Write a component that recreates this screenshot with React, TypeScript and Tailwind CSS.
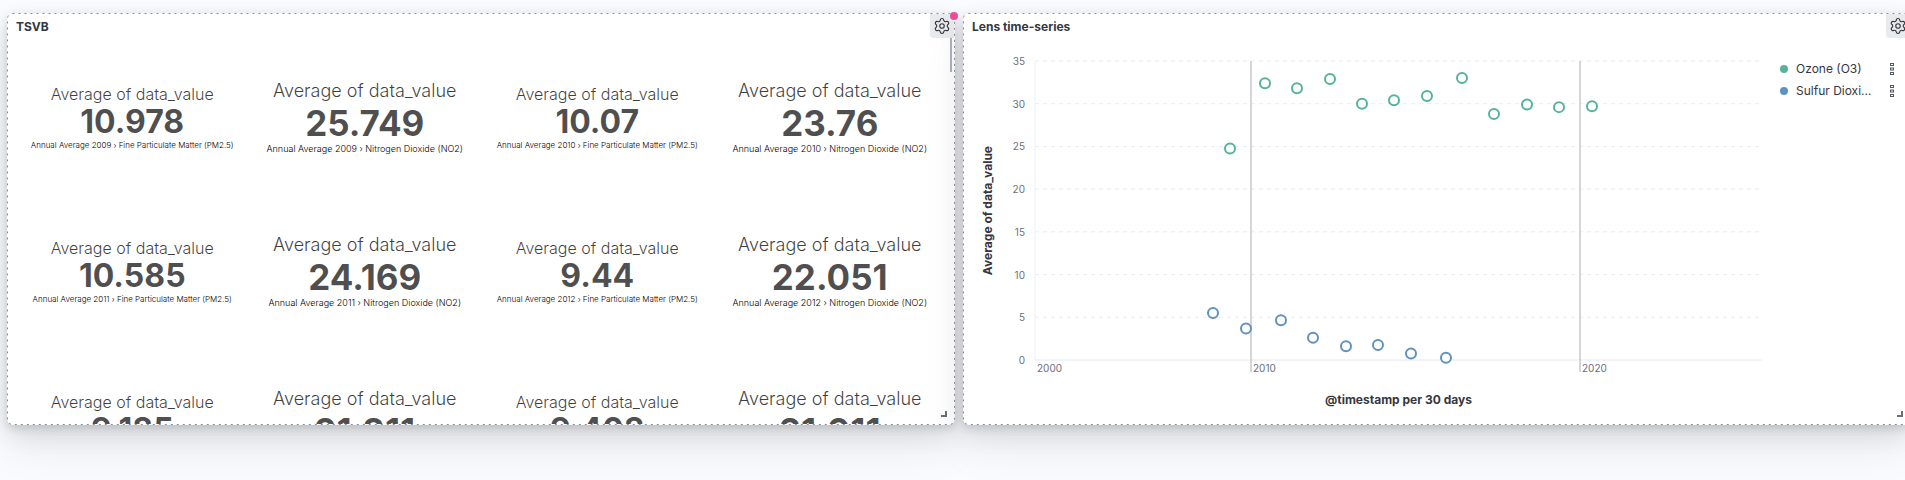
import type { ReactNode } from "react";
import { Settings } from "lucide-react";

type Metric = { value: string; label: string };

const metrics: Metric[] = [
  { value: "10.978", label: "Annual Average 2009 › Fine Particulate Matter (PM2.5)" },
  { value: "25.749", label: "Annual Average 2009 › Nitrogen Dioxide (NO2)" },
  { value: "10.07", label: "Annual Average 2010 › Fine Particulate Matter (PM2.5)" },
  { value: "23.76", label: "Annual Average 2010 › Nitrogen Dioxide (NO2)" },
  { value: "10.585", label: "Annual Average 2011 › Fine Particulate Matter (PM2.5)" },
  { value: "24.169", label: "Annual Average 2011 › Nitrogen Dioxide (NO2)" },
  { value: "9.44", label: "Annual Average 2012 › Fine Particulate Matter (PM2.5)" },
  { value: "22.051", label: "Annual Average 2012 › Nitrogen Dioxide (NO2)" },
  { value: "9.185", label: "Annual Average 2013 › Fine Particulate Matter (PM2.5)" },
  { value: "21.311", label: "Annual Average 2013 › Nitrogen Dioxide (NO2)" },
  { value: "9.408", label: "Annual Average 2014 › Fine Particulate Matter (PM2.5)" },
  { value: "21.011", label: "Annual Average 2014 › Nitrogen Dioxide (NO2)" },
];

// Horizontal positions are in units of the plot domain (0 to DOMAIN).
const DOMAIN = 727;
const PLOT_HEIGHT = 299;
const MAX_VALUE = 35;

const series = [
  {
    name: "Ozone (O3)",
    color: "#54b399",
    points: [
      [195, 24.75], [230, 32.4], [262, 31.8], [295, 32.9], [327, 30], [359, 30.4],
      [392, 30.9], [427, 33], [459, 28.8], [492, 29.9], [524, 29.6], [557, 29.7],
    ],
  },
  {
    name: "Sulfur Dioxi…",
    color: "#6092c0",
    points: [
      [178, 5.5], [211, 3.7], [246, 4.65], [278, 2.6], [311, 1.6], [343, 1.75], [376, 0.75], [411, 0.25],
    ],
  },
];

const xTicks = [
  { label: "2000", at: 0 },
  { label: "2010", at: 216 },
  { label: "2020", at: 545 },
];
const yTicks = [35, 30, 25, 20, 15, 10, 5, 0];

const px = (x: number) => `${(x / DOMAIN) * 100}%`;
const py = (v: number) => PLOT_HEIGHT - (v / MAX_VALUE) * PLOT_HEIGHT;

function Panel({ title, badge, children }: { title: string; badge?: boolean; children: ReactNode }) {
  return (
    <section className="relative flex h-[412px] min-w-0 flex-col rounded-md border border-transparent bg-white shadow-[0_3px_9px_rgba(0,0,0,0.13),0_9px_24px_rgba(0,0,0,0.09),0_22px_43px_rgba(0,0,0,0.08)]">
      <header className="flex h-6 shrink-0 items-center justify-between pl-2">
        <h2 className="pt-0.5 text-xs font-bold text-[#343741]">{title}</h2>
        <button
          type="button"
          aria-label="Panel options"
          className="flex size-6 items-center justify-center rounded-tr rounded-bl bg-[#e9eaec] text-[#343741]"
        >
          <Settings size={18} strokeWidth={1.5} />
        </button>
      </header>
      {children}
      <svg className="pointer-events-none absolute -inset-px size-[calc(100%+2px)]" aria-hidden="true">
        <rect
          x="0.5"
          y="0.5"
          rx="5"
          className="h-[calc(100%-1px)] w-[calc(100%-1px)]"
          fill="none"
          stroke="#858c9c"
          strokeDasharray="2 4"
        />
      </svg>
      <span className="absolute right-[7px] bottom-[7px] size-1.5 border-r-2 border-b-2 border-[#69707d]" />
      {badge && <span className="absolute -top-0.5 -right-1 size-2 rounded-full bg-[#f04e98]" />}
    </section>
  );
}

function MetricCell({ metric, large }: { metric: Metric; large: boolean }) {
  return (
    <div className="flex h-[154px] flex-col items-center justify-center whitespace-nowrap">
      <div className={large ? "text-[18px] leading-[26px] font-light text-black/75" : "text-[16px] leading-[24px] font-light text-black/75"}>
        Average of data_value
      </div>
      <div className={large ? "text-[35px] leading-[38px] font-bold text-black/70" : "text-[32px] leading-[32px] font-bold text-black/70"}>
        {metric.value}
      </div>
      <div className={large ? "text-[9px] leading-[14px] font-light text-black" : "text-[8px] leading-[14px] font-light text-black"}>
        {metric.label}
      </div>
    </div>
  );
}

function Chart() {
  return (
    <div className="flex min-h-0 flex-1 pt-[23px] pr-2">
      <div className="flex h-[299px] w-12 shrink-0 items-center pl-4">
        <span className="rotate-180 text-xs leading-4 font-bold whitespace-nowrap text-[#343741] [writing-mode:vertical-rl]">
          Average of data_value
        </span>
      </div>
      <div className="-mt-[7px] flex h-[313px] w-[13px] shrink-0 flex-col justify-between text-right text-[10px] leading-[14px] text-[#69707d]">
        {yTicks.map((t) => (
          <span key={t}>{t}</span>
        ))}
      </div>
      <div className="ml-2.5 flex min-w-0 flex-1 flex-col">
        <svg className="h-[315px] w-full shrink-0 overflow-visible" role="img" aria-label="Average of data_value over time">
          {yTicks.map((t) => (
            <line key={t} x1="0" x2="100%" y1={py(t)} y2={py(t)} stroke="#eaecf3" strokeDasharray="4 4" />
          ))}
          <line x1="0" x2="0" y1="0" y2={PLOT_HEIGHT} stroke="#eef0f6" />
          <line x1="0" x2="100%" y1={PLOT_HEIGHT} y2={PLOT_HEIGHT} stroke="#eceef6" />
          {xTicks.map((t) => (
            <g key={t.label}>
              {t.at > 0 && <line x1={px(t.at)} x2={px(t.at)} y1="0" y2="311" stroke="#c8c8ca" strokeWidth="1.5" />}
              <text x={px(t.at)} y="311" dx="2" fontSize="10" fill="#69707d">
                {t.label}
              </text>
            </g>
          ))}
          {series.map((s) =>
            s.points.map(([x, v]) => (
              <circle key={`${s.name}-${x}`} cx={px(x)} cy={py(v)} r="5" fill="#fff" stroke={s.color} strokeWidth="2" />
            )),
          )}
        </svg>
        <div className="mt-4 text-center text-xs leading-4 font-bold text-[#343741]">@timestamp per 30 days</div>
      </div>
      <ul className="-mt-[3px] ml-4 w-[124px] shrink-0 text-xs leading-[22px] text-[#343741]">
        {series.map((s) => (
          <li key={s.name} className="flex items-center">
            <svg viewBox="0 0 8 8" className="mr-2 ml-0.5 size-2">
              <circle cx="4" cy="4" r="4" fill={s.color} />
            </svg>
            <span className="flex-1">{s.name}</span>
            <button type="button" aria-label={`${s.name} options`} className="mr-[7px]">
              <svg viewBox="0 0 6 12" className="h-3 w-1.5" fill="none" stroke="#535766">
                <rect x="1.5" y="0.5" width="3" height="2" />
                <rect x="1.5" y="5" width="3" height="2" />
                <rect x="1.5" y="9.5" width="3" height="2" />
              </svg>
            </button>
          </li>
        ))}
      </ul>
    </div>
  );
}

export default function App() {
  return (
    <main className="min-h-screen overflow-hidden bg-[#f9fbff] pt-[13px] pl-[7px] font-[Inter,sans-serif]">
      <div className="-mr-1.5 grid grid-cols-2 gap-2">
        <Panel title="TSVB" badge>
          <div className="relative min-h-0 flex-1 overflow-hidden px-2 pt-0.5">
            <div className="grid grid-cols-4">
              {metrics.map((m, i) => (
                <MetricCell key={m.label} metric={m} large={i % 2 === 1} />
              ))}
            </div>
            <span className="absolute top-0 right-0.5 h-[34px] w-0.5 bg-[#aeb3bf]" />
          </div>
        </Panel>
        <Panel title="Lens time-series">
          <Chart />
        </Panel>
      </div>
    </main>
  );
}
